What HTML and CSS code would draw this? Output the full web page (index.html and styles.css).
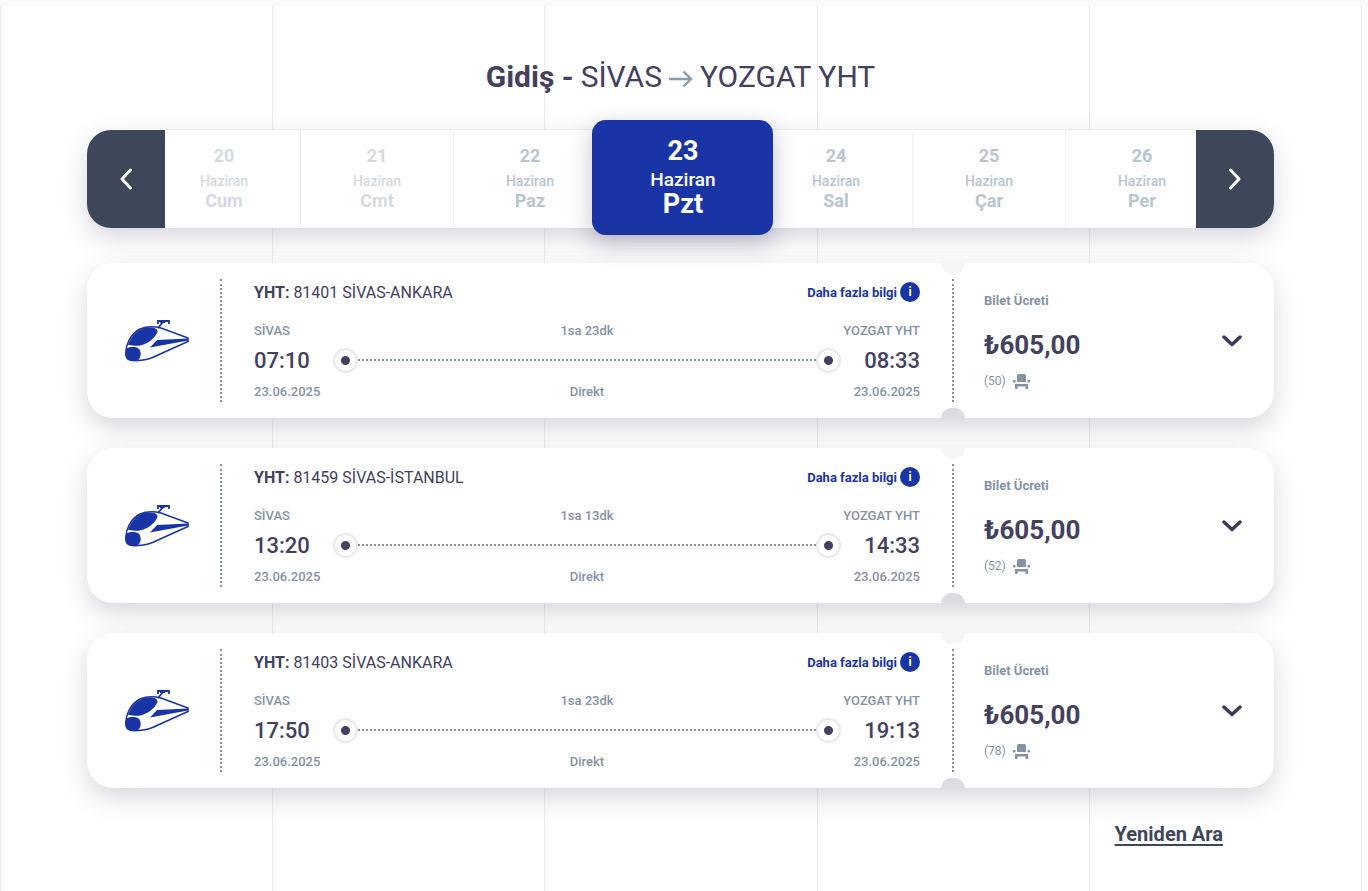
FILE: index.html
```html
<!DOCTYPE html>
<html lang="tr">
<head>
    <meta charset="UTF-8">
    <meta name="viewport" content="width=device-width, initial-scale=1.0">
    <title>Sefer Listesi</title>
    <link rel="stylesheet" href="styles.css">
</head>
<body>
    <!-- shared icons -->
    <svg class="icon-defs" width="0" height="0" aria-hidden="true">
        <symbol id="icon-train" viewBox="0 0 65 42">
            <path d="M1 35C0 26 5 14 15 9C21 6.500 30 6.500 36 8L63 18V21.500L33 35C24 40 15 41 7 40.500C3 40 1 38 1 35Z" fill="none" stroke="#1934a5" stroke-width="1.600"/>
            <path d="M3 25C6 16 13 8.500 22 7.500C28 7 33 8 32.500 12C30 18 23 24 15 25.500C11 26.500 6 24.500 3 25Z" fill="#1934a5"/>
            <path d="M1 29C4 26.500 10 26.500 13.500 28.500C16.500 31 16.500 37 13 40C9 41 4 41 2 38.500C0 36 0 32 1 29Z" fill="#1934a5"/>
            <path d="M25 27.500L32 20L63 18.500V20.500Z" fill="#1934a5"/>
            <path d="M33 8L38 2M33 4V1H44V4M35 2H40" fill="none" stroke="#1934a5" stroke-width="1.800"/>
        </symbol>
        <symbol id="icon-seat" viewBox="0 0 17 15">
            <path d="M5.500 0H11.500Q13 0 13 1.500V8H4V1.500Q4 0 5.500 0ZM0 6H2.500V8.500H0ZM14.500 6H17V8.500H14.500ZM2 10H15V15H12.500V12.500H4.500V15H2Z" fill="#8592a6"/>
        </symbol>
        <symbol id="icon-down" viewBox="0 0 20 12">
            <path d="M2 2L10 9.500L18 2" fill="none" stroke="#3e3a5c" stroke-width="3.500" stroke-linecap="round" stroke-linejoin="round"/>
        </symbol>
    </svg>

    <main class="page">
        <div class="grid-lines" aria-hidden="true">
            <span></span><span></span><span></span><span></span><span></span>
        </div>

        <h1 class="title">
            <b>Gidiş -</b> SİVAS
            <svg class="title-arrow" viewBox="0 0 24 18" width="24" height="18" aria-hidden="true"><path d="M0 9H22M14.500 1.500L22 9L14.500 16.500" fill="none" stroke="#8a9bae" stroke-width="2.400"/></svg>
            YOZGAT YHT
        </h1>

        <nav class="dates" aria-label="Tarih">
            <button class="dates-nav dates-prev" type="button" aria-label="Önceki">
                <svg viewBox="0 0 14 22" width="14" height="22"><path d="M11.500 2L3 11L11.500 20" fill="none" stroke="#fff" stroke-width="3" stroke-linecap="round" stroke-linejoin="round"/></svg>
            </button>
            <div class="dates-view">
                <div class="dates-track">
                    <button class="day past" type="button"><b>20</b><span>Haziran</span><b>Cum</b></button>
                    <button class="day past" type="button"><b>21</b><span>Haziran</span><b>Cmt</b></button>
                    <button class="day" type="button"><b>22</b><span>Haziran</span><b>Paz</b></button>
                    <button class="day selected" type="button"><b>23</b><span>Haziran</span><b>Pzt</b></button>
                    <button class="day" type="button"><b>24</b><span>Haziran</span><b>Sal</b></button>
                    <button class="day" type="button"><b>25</b><span>Haziran</span><b>Çar</b></button>
                    <button class="day" type="button"><b>26</b><span>Haziran</span><b>Per</b></button>
                </div>
            </div>
            <button class="dates-nav dates-next" type="button" aria-label="Sonraki">
                <svg viewBox="0 0 14 22" width="14" height="22"><path d="M2.500 2L11 11L2.500 20" fill="none" stroke="#fff" stroke-width="3" stroke-linecap="round" stroke-linejoin="round"/></svg>
            </button>
        </nav>

        <section class="trips">
            <article class="trip">
                <div class="trip-logo"><svg width="65" height="42"><use href="#icon-train"/></svg></div>
                <div class="trip-info">
                    <div class="trip-head">
                        <h2 class="trip-name"><b>YHT:</b> 81401 SİVAS-ANKARA</h2>
                        <button class="more" type="button">Daha fazla bilgi <i class="more-icon">i</i></button>
                    </div>
                    <div class="trip-row stations"><span>SİVAS</span><span>1sa 23dk</span><span>YOZGAT YHT</span></div>
                    <div class="times">
                        <time>07:10</time>
                        <div class="route"><i class="stop"></i><i class="line"></i><i class="stop"></i></div>
                        <time>08:33</time>
                    </div>
                    <div class="trip-row"><span>23.06.2025</span><span>Direkt</span><span>23.06.2025</span></div>
                </div>
                <div class="trip-price">
                    <div class="price-text">
                        <span class="price-label">Bilet Ücreti</span>
                        <span class="price">₺605,00</span>
                        <span class="seats">(50) <svg width="17" height="15"><use href="#icon-seat"/></svg></span>
                    </div>
                    <button class="toggle" type="button" aria-label="Detay"><svg width="20" height="12"><use href="#icon-down"/></svg></button>
                </div>
            </article>

            <article class="trip">
                <div class="trip-logo"><svg width="65" height="42"><use href="#icon-train"/></svg></div>
                <div class="trip-info">
                    <div class="trip-head">
                        <h2 class="trip-name"><b>YHT:</b> 81459 SİVAS-İSTANBUL</h2>
                        <button class="more" type="button">Daha fazla bilgi <i class="more-icon">i</i></button>
                    </div>
                    <div class="trip-row stations"><span>SİVAS</span><span>1sa 13dk</span><span>YOZGAT YHT</span></div>
                    <div class="times">
                        <time>13:20</time>
                        <div class="route"><i class="stop"></i><i class="line"></i><i class="stop"></i></div>
                        <time>14:33</time>
                    </div>
                    <div class="trip-row"><span>23.06.2025</span><span>Direkt</span><span>23.06.2025</span></div>
                </div>
                <div class="trip-price">
                    <div class="price-text">
                        <span class="price-label">Bilet Ücreti</span>
                        <span class="price">₺605,00</span>
                        <span class="seats">(52) <svg width="17" height="15"><use href="#icon-seat"/></svg></span>
                    </div>
                    <button class="toggle" type="button" aria-label="Detay"><svg width="20" height="12"><use href="#icon-down"/></svg></button>
                </div>
            </article>

            <article class="trip">
                <div class="trip-logo"><svg width="65" height="42"><use href="#icon-train"/></svg></div>
                <div class="trip-info">
                    <div class="trip-head">
                        <h2 class="trip-name"><b>YHT:</b> 81403 SİVAS-ANKARA</h2>
                        <button class="more" type="button">Daha fazla bilgi <i class="more-icon">i</i></button>
                    </div>
                    <div class="trip-row stations"><span>SİVAS</span><span>1sa 23dk</span><span>YOZGAT YHT</span></div>
                    <div class="times">
                        <time>17:50</time>
                        <div class="route"><i class="stop"></i><i class="line"></i><i class="stop"></i></div>
                        <time>19:13</time>
                    </div>
                    <div class="trip-row"><span>23.06.2025</span><span>Direkt</span><span>23.06.2025</span></div>
                </div>
                <div class="trip-price">
                    <div class="price-text">
                        <span class="price-label">Bilet Ücreti</span>
                        <span class="price">₺605,00</span>
                        <span class="seats">(78) <svg width="17" height="15"><use href="#icon-seat"/></svg></span>
                    </div>
                    <button class="toggle" type="button" aria-label="Detay"><svg width="20" height="12"><use href="#icon-down"/></svg></button>
                </div>
            </article>
        </section>

        <div class="footer">
            <a class="again" href="#">Yeniden Ara</a>
        </div>
    </main>
</body>
</html>
```

FILE: styles.css
```css
* {
    box-sizing: border-box;
}

body {
    margin: 0;
    background-color: #fff;
    border-top: 6px solid #f9fafb;
    color: #434060;
    font-family: Roboto, "Liberation Sans", sans-serif;
}

button {
    margin: 0;
    padding: 0;
    border: none;
    background: none;
    color: inherit;
    font-family: inherit;
    cursor: pointer;
}

svg {
    display: block;
}

.icon-defs {
    position: absolute;
}

.page {
    position: relative;
    min-height: calc(100vh - 6px);
    margin-right: 6px;
    padding: 51px 88px 40px 87px;
}

/* vertical lines behind the page */
.grid-lines {
    position: absolute;
    inset: 0;
    z-index: -1;
    display: flex;
    border-right: 1px solid #ebebed;
}

.grid-lines span {
    flex: 1;
    border-left: 1px solid #ebebed;
}

.title {
    display: flex;
    justify-content: center;
    align-items: center;
    gap: 7px;
    margin: 0;
    font-size: 30px;
    line-height: 40px;
    font-weight: 400;
}

.title-arrow {
    margin-top: 4px;
}

/* date slider */
.dates {
    display: flex;
    height: 99px;
    margin-top: 32px;
    border-radius: 24px;
    box-shadow: 0 10px 26px rgba(62, 50, 90, 0.2);
}

.dates-nav {
    position: relative;
    z-index: 1;
    display: flex;
    flex: 0 0 78px;
    justify-content: center;
    align-items: center;
    margin-top: 1px;
    background-color: #3d4759;
}

.dates-prev {
    border-radius: 24px 0 0 24px;
}

.dates-next {
    border-radius: 0 24px 24px 0;
}

.dates-view {
    flex: 1;
    min-width: 0;
    background-color: #fff;
    border-top: 1px solid #ebecf0;
}

.dates-track {
    display: flex;
    height: 100%;
    margin: 0 -22px 0 -18px;
}

.day {
    display: flex;
    flex: 1;
    flex-direction: column;
    justify-content: center;
    align-items: center;
    padding-bottom: 2px;
    border-left: 1px solid #f0f1f4;
    color: #b9c4d3;
    font-size: 14px;
    line-height: 20px;
    font-weight: 500;
}

.day b {
    font-size: 18px;
    font-weight: 700;
}

.day b:first-child {
    margin-bottom: 5px;
}

.day.past {
    color: #d3dae3;
}

.day.selected {
    z-index: 1;
    flex: 0 0 calc(100% / 7 + 28px);
    margin: -10px -14px -7px;
    padding-bottom: 0;
    border-color: #1934a5;
    border-radius: 14px;
    background-color: #1934a5;
    color: #fff;
    box-shadow: 0 8px 24px rgba(62, 50, 90, 0.3);
    font-size: 19px;
    line-height: 24px;
}

.day.selected b {
    font-size: 27px;
}

/* trip cards */
.trips {
    display: flex;
    flex-direction: column;
    gap: 30px;
    margin-top: 35px;
}

.trip {
    display: flex;
    border-radius: 26px;
    background-color: #fff;
    box-shadow: 0 10px 26px rgba(62, 50, 90, 0.2);
    padding: 16px 0;
}

.trip-logo {
    display: flex;
    flex: 0 0 135px;
    align-items: center;
    padding-left: 38px;
    border-right: 2px dotted #8592a6;
}

.trip-info {
    flex: 1;
    padding: 0 32px;
}

.trip-head {
    display: flex;
    justify-content: space-between;
    align-items: center;
    height: 26px;
    margin-bottom: 16px;
}

.trip-name {
    margin: 0;
    font-size: 16px;
    font-weight: 400;
}

.more {
    display: flex;
    align-items: center;
    gap: 3px;
    color: #1934a5;
    font-size: 13px;
    font-weight: 700;
}

.more-icon {
    width: 20px;
    border-radius: 50%;
    background-color: #1934a5;
    color: #fff;
    font-size: 12px;
    line-height: 20px;
    font-style: normal;
    text-align: center;
}

.trip-row {
    display: grid;
    grid-template-columns: 1fr auto 1fr;
    color: #8592a6;
    font-size: 13px;
    line-height: 20px;
    font-weight: 500;
}

.trip-row span:last-child {
    text-align: right;
}

.times {
    display: flex;
    align-items: center;
    gap: 23px;
    height: 28px;
    margin: 5px 0 8px;
    font-size: 22px;
    font-weight: 500;
}

.route {
    display: flex;
    flex: 1;
    align-items: center;
}

.stop {
    width: 25px;
    height: 25px;
    border: 2px solid #e6e9ee;
    border-radius: 50%;
    background: radial-gradient(circle, #434060 4px, #fff 5px);
}

.line {
    flex: 1;
    border-top: 2px dotted #8592a6;
}

.trip-price {
    position: relative;
    display: flex;
    flex: 0 0 322px;
    justify-content: space-between;
    padding: 0 32px 0 30px;
    border-left: 2px dotted #8592a6;
}

/* ticket notches on the divider */
.trip-price::before,
.trip-price::after {
    content: "";
    position: absolute;
    left: -13px;
    width: 24px;
}

.trip-price::before {
    top: -16px;
    height: 11px;
    border-radius: 0 0 12px 12px;
    background-color: #f6f6f9;
}

.trip-price::after {
    bottom: -16px;
    height: 10px;
    border-radius: 12px 12px 0 0;
    background-color: #dddce3;
}

.price-text {
    display: flex;
    flex-direction: column;
    padding-top: 12px;
}

.price-label {
    color: #8592a6;
    font-size: 13px;
    line-height: 20px;
    font-weight: 700;
}

.price {
    margin: 18px 0 12px;
    font-size: 26px;
    line-height: 32px;
    font-weight: 700;
}

.seats {
    display: flex;
    align-items: center;
    gap: 7px;
    color: #8592a6;
    font-size: 12px;
    line-height: 16px;
}

.toggle {
    align-self: center;
}

.footer {
    display: flex;
    justify-content: flex-end;
    margin-top: 32px;
    padding-right: 51px;
}

.again {
    color: #3d4759;
    font-size: 20px;
    line-height: 28px;
    font-weight: 700;
    text-underline-offset: 3px;
    text-decoration-thickness: 2px;
}
```
